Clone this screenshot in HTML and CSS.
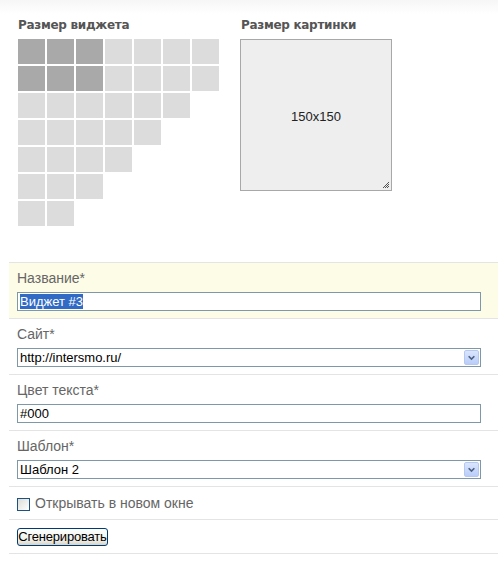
FILE: index.html
```html
<!DOCTYPE html>
<html lang="ru">
<head>
<meta charset="utf-8">
<title>Виджет</title>
<link rel="stylesheet" href="styles.css">
</head>
<body>
<div class="page">
  <div class="sizes">
    <div class="col widget-col">
      <h3 class="title">Размер виджета</h3>
      <div class="grid">
        <div class="grow"><span class="cell on"></span><span class="cell on"></span><span class="cell on"></span><span class="cell"></span><span class="cell"></span><span class="cell"></span><span class="cell"></span></div>
        <div class="grow"><span class="cell on"></span><span class="cell on"></span><span class="cell on"></span><span class="cell"></span><span class="cell"></span><span class="cell"></span><span class="cell"></span></div>
        <div class="grow"><span class="cell"></span><span class="cell"></span><span class="cell"></span><span class="cell"></span><span class="cell"></span><span class="cell"></span></div>
        <div class="grow"><span class="cell"></span><span class="cell"></span><span class="cell"></span><span class="cell"></span><span class="cell"></span></div>
        <div class="grow"><span class="cell"></span><span class="cell"></span><span class="cell"></span><span class="cell"></span></div>
        <div class="grow"><span class="cell"></span><span class="cell"></span><span class="cell"></span></div>
        <div class="grow"><span class="cell"></span><span class="cell"></span></div>
      </div>
    </div>
    <div class="col image-col">
      <h3 class="title">Размер картинки</h3>
      <div class="imgbox">
        <span class="imgsize">150x150</span>
        <svg class="grip" width="8" height="8" viewBox="0 0 8 8">
          <path d="M7 1 L1 7 M7 3 L3 7 M7 5 L5 7" stroke="#555" stroke-width="1"/>
        </svg>
      </div>
    </div>
  </div>

  <div class="form">
    <div class="row row-active">
      <div class="label">Название*</div>
      <div class="field"><span class="selected">Виджет #3</span></div>
    </div>
    <div class="row">
      <div class="label">Сайт*</div>
      <div class="field select">
        <span>http://intersmo.ru/</span>
        <span class="arrow"><svg width="16" height="15" viewBox="0 0 16 15"><path d="M4.5 6 L8 9.5 L11.5 6" fill="none" stroke="#4d6185" stroke-width="2"/></svg></span>
      </div>
    </div>
    <div class="row">
      <div class="label">Цвет текста*</div>
      <div class="field">#000</div>
    </div>
    <div class="row">
      <div class="label">Шаблон*</div>
      <div class="field select">
        <span>Шаблон 2</span>
        <span class="arrow"><svg width="16" height="15" viewBox="0 0 16 15"><path d="M4.5 6 L8 9.5 L11.5 6" fill="none" stroke="#4d6185" stroke-width="2"/></svg></span>
      </div>
    </div>
    <div class="row row-check">
      <span class="checkbox"></span>
      <span class="check-label">Открывать в новом окне</span>
    </div>
    <div class="row row-button">
      <button class="btn" type="button">Сгенерировать</button>
    </div>
  </div>
</div>
</body>
</html>
```

FILE: styles.css
```css
html, body {
  margin: 0;
  padding: 0;
}
body {
  background: linear-gradient(#f6f6f6 0px, #ffffff 14px);
  font-family: "Liberation Sans", Arial, sans-serif;
  width: 498px;
  height: 562px;
  overflow: hidden;
}
.page {
  padding-top: 18px;
}
.sizes {
  display: flex;
  gap: 21px;
  padding-left: 18px;
}
.title {
  margin: 0 0 6px 0;
  font-family: "DejaVu Sans", Verdana, sans-serif;
  font-weight: bold;
  font-size: 12px;
  letter-spacing: -0.3px;
  line-height: 15px;
  color: #555;
}
.grid {
  display: flex;
  flex-direction: column;
  gap: 2px;
}
.grow {
  display: flex;
  gap: 2px;
}
.cell {
  width: 27px;
  height: 25px;
  background: #dcdcdc;
}
.cell.on {
  background: #a9a9a9;
}
.image-col .title {
  padding-left: 1px;
}
.imgbox {
  position: relative;
  width: 150px;
  height: 150px;
  border: 1px solid #a8a8a8;
  background: #eeeeee;
  display: flex;
  align-items: center;
  justify-content: center;
}
.imgsize {
  font-size: 13px;
  color: #222;
  margin-top: 2px;
}
.grip {
  position: absolute;
  right: 1px;
  bottom: 1px;
}
.form {
  margin-top: 36px;
  margin-left: 9px;
}
.row {
  border-top: 1px solid #e4e4e4;
  padding: 7px 0 7px 8px;
}
.row-active {
  background: #fdfce6;
}
.label {
  font-size: 14px;
  line-height: 16px;
  color: #666;
  margin-bottom: 6px;
}
.field {
  position: relative;
  box-sizing: border-box;
  width: 464px;
  height: 19px;
  border: 1px solid #7f98a8;
  background: #fff;
  font-size: 13px;
  line-height: 17px;
  color: #000;
  padding-left: 2px;
}
.selected {
  background: #316ac5;
  color: #fff;
  display: inline-block;
  line-height: 15px;
  margin-top: 1px;
  vertical-align: top;
}
.arrow {
  position: absolute;
  right: 1px;
  top: 1px;
  width: 15px;
  height: 15px;
  box-sizing: border-box;
  border: 1px solid #b5c8f2;
  border-radius: 2px;
  background: linear-gradient(#dbe6fd, #b8cdf9);
  display: flex;
  align-items: center;
  justify-content: center;
}
.arrow svg {
  display: block;
}
.row-check {
  display: flex;
  align-items: flex-start;
  gap: 5px;
  padding-top: 8px;
  padding-bottom: 8px;
}
.checkbox {
  width: 13px;
  height: 13px;
  box-sizing: border-box;
  margin-top: 3px;
  border: 1px solid #1c5180;
  background: linear-gradient(135deg, #dcdcd7, #ffffff);
}
.check-label {
  font-size: 14px;
  line-height: 16px;
  color: #666;
}
.row-button {
  padding-top: 8px;
  padding-bottom: 7px;
  border-bottom: 1px solid #e4e4e4;
}
.btn {
  display: block;
  width: 91px;
  height: 18px;
  padding: 0;
  margin: 0;
  border: 1px solid #003c74;
  border-radius: 3px;
  background: linear-gradient(#ffffff, #f0efe9 70%, #d8d3c8);
  font-family: "Liberation Sans", Arial, sans-serif;
  font-size: 13px;
  letter-spacing: -0.2px;
  line-height: 16px;
  color: #000;
  white-space: nowrap;
}
```
